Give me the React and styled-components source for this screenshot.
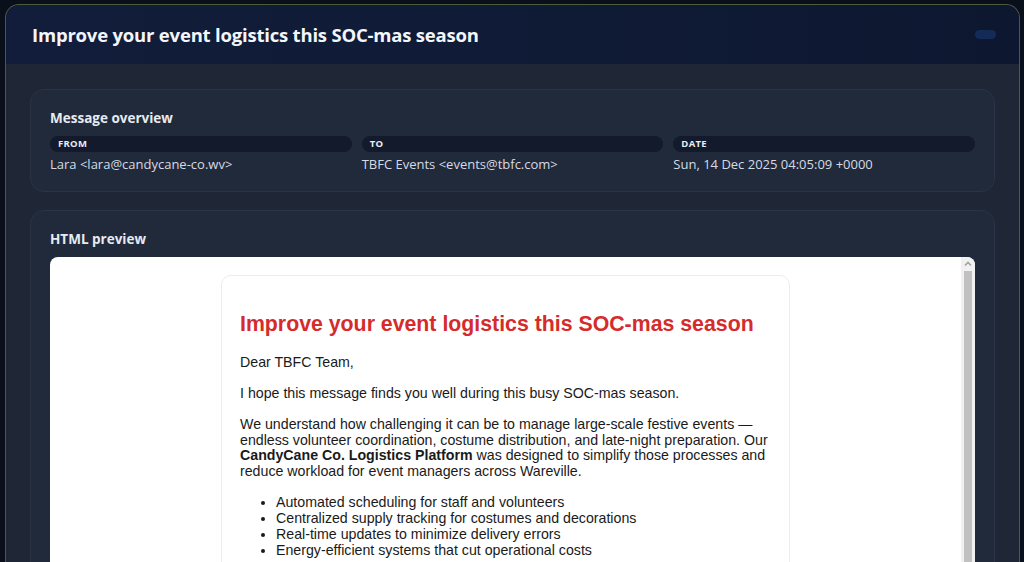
import React from "react";
import styled, { createGlobalStyle } from "styled-components";

const GlobalStyle = createGlobalStyle`
  html, body {
    margin: 0;
    padding: 0;
    background: #0a0f1c;
    height: 100%;
    overflow: hidden;
  }
  body {
    font-family: "Open Sans", "Noto Sans", sans-serif;
  }
`;

const Shell = styled.div`
  margin: 4px 4px 0 5px;
  border: 1px solid #4c5b3d;
  border-bottom: none;
  border-radius: 14px 14px 0 0;
  overflow: hidden;
  background: #1f2737;
  height: 600px;
`;

const Header = styled.header`
  height: 59px;
  padding: 0 26px;
  display: flex;
  align-items: center;
  justify-content: space-between;
  background: linear-gradient(90deg, #121d3b 0%, #0f1a35 60%, #0e1730 100%);
`;

const Title = styled.h1`
  margin: 0;
  font-size: 18.5px;
  font-weight: 700;
  color: #f3f6fb;
  letter-spacing: -0.2px;
`;

const Pill = styled.span`
  width: 21px;
  height: 9px;
  border-radius: 5px;
  background: #142b57;
  margin-right: -3px;
`;

const Body = styled.main`
  padding: 25px 24px 0 24px;
  display: flex;
  flex-direction: column;
  gap: 18px;
`;

const Card = styled.section`
  background: #212a3a;
  border: 1px solid #2a3446;
  border-radius: 14px;
  padding: 18px 19px 18px;
`;

const CardTitle = styled.h2`
  margin: 0 0 8px;
  font-size: 13.5px;
  line-height: 20px;
  font-weight: 700;
  color: #e6ebf3;
`;

const Grid = styled.div`
  display: grid;
  grid-template-columns: repeat(3, 1fr);
  gap: 10px;
`;

const Field = styled.div`
  display: flex;
  flex-direction: column;
  gap: 4px;
`;

const Label = styled.div`
  height: 16px;
  border-radius: 8px;
  background: #121a2b;
  padding: 0 8px;
  font-size: 9.5px;
  line-height: 16px;
  font-weight: 700;
  letter-spacing: 0.3px;
  text-transform: uppercase;
  color: #e8edf5;
`;

const Value = styled.div`
  font-size: 13px;
  line-height: 17px;
  color: #d5dbe5;
`;

const Frame = styled.div`
  display: flex;
  background: #ffffff;
  border-radius: 8px 8px 0 0;
  height: 330px;
  overflow: hidden;
`;

const FrameContent = styled.div`
  flex: 1;
  padding-top: 18px;
  overflow: hidden;
`;

const ScrollTrack = styled.div`
  width: 14px;
  display: flex;
  flex-direction: column;
  align-items: center;
  background: #f1f1f1;
`;

const ScrollArrow = styled.svg`
  width: 14px;
  height: 14px;
  flex-shrink: 0;
`;

const ScrollThumb = styled.div`
  width: 8px;
  flex: 1;
  background: #c1c1c1;
`;

const Mail = styled.article`
  width: 569px;
  box-sizing: border-box;
  margin: 0 auto;
  border: 1px solid #ececec;
  border-radius: 10px;
  padding: 18px 18px 20px;
  font-family: "Liberation Sans", Arial, sans-serif;
  font-size: 14.2px;
  color: #1a1a1a;
`;

const MailHeading = styled.h3`
  margin: 17px 0 18px;
  font-size: 21.3px;
  line-height: 26px;
  font-weight: 700;
  color: #d52b2b;
`;

const Para = styled.p`
  margin: 0 0 15.5px;
  line-height: 15.6px;
`;

const List = styled.ul`
  margin: -1.5px 0 16px;
  padding-left: 36px;
  line-height: 16px;
`;

const fields = [
  { label: "From", value: "Lara <lara@candycane-co.wv>" },
  { label: "To", value: "TBFC Events <events@tbfc.com>" },
  { label: "Date", value: "Sun, 14 Dec 2025 04:05:09 +0000" },
];

const features = [
  "Automated scheduling for staff and volunteers",
  "Centralized supply tracking for costumes and decorations",
  "Real-time updates to minimize delivery errors",
  "Energy-efficient systems that cut operational costs",
];

const App = () => {
  return (
    <>
      <GlobalStyle />
      <Shell>
        <Header>
          <Title>Improve your event logistics this SOC-mas season</Title>
          <Pill />
        </Header>
        <Body>
          <Card>
            <CardTitle>Message overview</CardTitle>
            <Grid>
              {fields.map((f) => (
                <Field key={f.label}>
                  <Label>{f.label}</Label>
                  <Value>{f.value}</Value>
                </Field>
              ))}
            </Grid>
          </Card>
          <Card>
            <CardTitle>HTML preview</CardTitle>
            <Frame>
              <FrameContent>
                <Mail>
                  <MailHeading>Improve your event logistics this SOC-mas season</MailHeading>
                  <Para>Dear TBFC Team,</Para>
                  <Para>I hope this message finds you well during this busy SOC-mas season.</Para>
                  <Para>
                    We understand how challenging it can be to manage large-scale festive events —
                    endless volunteer coordination, costume distribution, and late-night preparation. Our{" "}
                    <b>CandyCane Co. Logistics Platform</b> was designed to simplify those processes and
                    reduce workload for event managers across Wareville.
                  </Para>
                  <List>
                    {features.map((item) => (
                      <li key={item}>{item}</li>
                    ))}
                  </List>
                </Mail>
              </FrameContent>
              <ScrollTrack>
                <ScrollArrow viewBox="0 0 14 14">
                  <path d="M4 8.5 L7 5.5 L10 8.5" fill="none" stroke="#a3a3a3" strokeWidth="1.6" />
                </ScrollArrow>
                <ScrollThumb />
              </ScrollTrack>
            </Frame>
          </Card>
        </Body>
      </Shell>
    </>
  );
};

export default App;
